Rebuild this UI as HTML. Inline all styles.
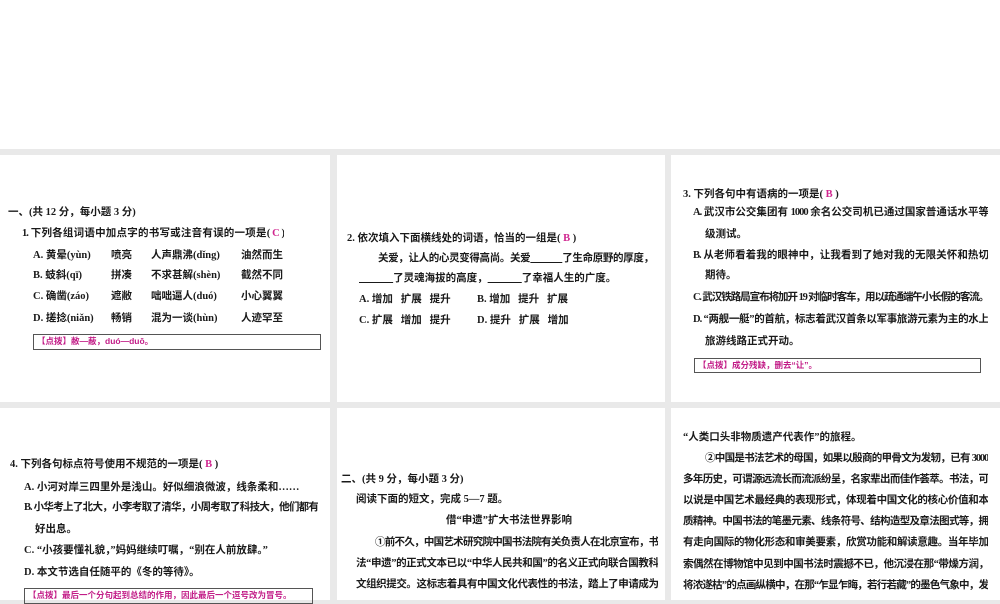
<!DOCTYPE html>
<html><head><meta charset="utf-8"><style>
*{margin:0;padding:0;box-sizing:border-box}
body{width:1000px;height:600px;background:#e9e9e9;position:relative;overflow:hidden;font-family:"Liberation Serif","Noto Sans CJK SC",sans-serif;color:#1a1a1a}
.top{position:absolute;left:0;top:0;width:1000px;height:149px;background:#fff}
.p{position:absolute;background:#fff}
.l{position:absolute;font-size:10.5px;line-height:14px;white-space:nowrap;font-weight:bold;font-family:"Liberation Serif","Noto Sans CJK SC",sans-serif;overflow:hidden}
.j{text-align:justify;text-align-last:justify;letter-spacing:-1px}
.ans{color:#d0268f}
.box{position:absolute;border:1px solid #555;font-size:8.5px;line-height:12px;color:#c21c87;padding-left:3px;white-space:nowrap;font-weight:bold;font-family:"Liberation Sans","Noto Sans CJK SC",sans-serif;overflow:hidden}
</style></head><body>
<div class="top"></div>
<div class="p" style="left:0;top:155px;width:330px;height:247px"></div>
<div class="p" style="left:337px;top:155px;width:328px;height:247px"></div>
<div class="p" style="left:671px;top:155px;width:329px;height:247px"></div>
<div class="p" style="left:0;top:408px;width:330px;height:192px"></div>
<div class="p" style="left:337px;top:408px;width:328px;height:192px"></div>
<div class="p" style="left:671px;top:408px;width:329px;height:192px"></div>

<!-- panel 1 -->
<div class="l" style="left:8px;top:206px">一、(共 12 分，每小题 3 分)</div>
<div class="l j" style="left:22px;top:227px;width:262px">1. 下列各组词语中加点字的书写或注音有误的一项是( <span class="ans">C</span> )</div>
<div class="l" style="left:33px;top:249px">A. 黄晕(yùn)</div><div class="l" style="left:111px;top:249px">喷亮</div><div class="l" style="left:151px;top:249px">人声鼎沸(dǐng)</div><div class="l" style="left:241px;top:249px">油然而生</div>
<div class="l" style="left:33px;top:269px">B. 蚑斜(qī)</div><div class="l" style="left:111px;top:269px">拼凑</div><div class="l" style="left:151px;top:269px">不求甚解(shèn)</div><div class="l" style="left:241px;top:269px">截然不同</div>
<div class="l" style="left:33px;top:290px">C. 确凿(záo)</div><div class="l" style="left:111px;top:290px">遮敝</div><div class="l" style="left:151px;top:290px">咄咄逼人(duó)</div><div class="l" style="left:241px;top:290px">小心翼翼</div>
<div class="l" style="left:33px;top:312px">D. 搓捻(niǎn)</div><div class="l" style="left:111px;top:312px">畅销</div><div class="l" style="left:151px;top:312px">混为一谈(hùn)</div><div class="l" style="left:241px;top:312px">人迹罕至</div>
<div class="box" style="left:33px;top:334px;width:288px;height:16px">【点拨】敝—蔽，duó—duō。</div>

<!-- panel 2 -->
<div class="l" style="left:347px;top:232px">2. 依次填入下面横线处的词语，恰当的一组是( <span class="ans">B</span> )</div>
<div class="l j" style="left:378px;top:252px;width:275px">关爱，让人的心灵变得高尚。关爱<u>&nbsp;&nbsp;&nbsp;&nbsp;&nbsp;&nbsp;&nbsp;&nbsp;&nbsp;&nbsp;&nbsp;&nbsp;&nbsp;&nbsp;</u>了生命原野的厚度，</div>
<div class="l" style="left:359px;top:272px"><u>&nbsp;&nbsp;&nbsp;&nbsp;&nbsp;&nbsp;&nbsp;&nbsp;&nbsp;&nbsp;&nbsp;&nbsp;&nbsp;</u>了灵魂海拔的高度，<u>&nbsp;&nbsp;&nbsp;&nbsp;&nbsp;&nbsp;&nbsp;&nbsp;&nbsp;&nbsp;&nbsp;&nbsp;&nbsp;</u>了幸福人生的广度。</div>
<div class="l" style="left:359px;top:293px">A. 增加&nbsp;&nbsp;&nbsp;扩展&nbsp;&nbsp;&nbsp;提升</div><div class="l" style="left:477px;top:293px">B. 增加&nbsp;&nbsp;&nbsp;提升&nbsp;&nbsp;&nbsp;扩展</div>
<div class="l" style="left:359px;top:314px">C. 扩展&nbsp;&nbsp;&nbsp;增加&nbsp;&nbsp;&nbsp;提升</div><div class="l" style="left:477px;top:314px">D. 提升&nbsp;&nbsp;&nbsp;扩展&nbsp;&nbsp;&nbsp;增加</div>

<!-- panel 3 -->
<div class="l" style="left:683px;top:188px">3. 下列各句中有语病的一项是( <span class="ans">B</span> )</div>
<div class="l j" style="left:693px;top:206px;width:295px">A. 武汉市公交集团有 1000 余名公交司机已通过国家普通话水平等</div>
<div class="l" style="left:705px;top:228px">级测试。</div>
<div class="l j" style="left:693px;top:249px;width:295px">B. 从老师看着我的眼神中，让我看到了她对我的无限关怀和热切</div>
<div class="l" style="left:705px;top:269px">期待。</div>
<div class="l j" style="left:693px;top:291px;width:295px;letter-spacing:-1.3px">C. 武汉铁路局宣布将加开 19 对临时客车，用以疏通端午小长假的客流。</div>
<div class="l j" style="left:693px;top:313px;width:295px">D. “两舰一艇”的首航，标志着武汉首条以军事旅游元素为主的水上</div>
<div class="l" style="left:705px;top:335px">旅游线路正式开动。</div>
<div class="box" style="left:694px;top:358px;width:287px;height:15px">【点拨】成分残缺，删去“让”。</div>

<!-- row2 panel1 -->
<div class="l" style="left:10px;top:458px">4. 下列各句标点符号使用不规范的一项是( <span class="ans">B</span> )</div>
<div class="l" style="left:24px;top:481px">A. 小河对岸三四里外是浅山。好似细浪微波，线条柔和……</div>
<div class="l j" style="left:24px;top:501px;width:294px">B. 小华考上了北大，小李考取了清华，小周考取了科技大，他们都有</div>
<div class="l" style="left:35px;top:523px">好出息。</div>
<div class="l" style="left:24px;top:544px">C. “小孩要懂礼貌，”妈妈继续叮嘱，“别在人前放肆。”</div>
<div class="l" style="left:24px;top:566px">D. 本文节选自任随平的《冬的等待》。</div>
<div class="box" style="left:24px;top:588px;width:289px;height:16px">【点拨】最后一个分句起到总结的作用，因此最后一个逗号改为冒号。</div>

<!-- row2 panel2 -->
<div class="l" style="left:341px;top:473px">二、(共 9 分，每小题 3 分)</div>
<div class="l" style="left:356px;top:493px">阅读下面的短文，完成 5—7 题。</div>
<div class="l" style="left:446px;top:514px">借“申遗”扩大书法世界影响</div>
<div class="l j" style="left:375px;top:536px;width:283px;letter-spacing:-1.1px">①前不久，中国艺术研究院中国书法院有关负责人在北京宣布，书</div>
<div class="l j" style="left:356px;top:557px;width:302px">法“申遗”的正式文本已以“中华人民共和国”的名义正式向联合国教科</div>
<div class="l j" style="left:356px;top:578px;width:302px">文组织提交。这标志着具有中国文化代表性的书法，踏上了申请成为</div>

<!-- row2 panel3 -->
<div class="l" style="left:683px;top:431px">“人类口头非物质遗产代表作”的旅程。</div>
<div class="l j" style="left:705px;top:452px;width:283px;letter-spacing:-1.2px">②中国是书法艺术的母国，如果以殷商的甲骨文为发轫，已有 3000</div>
<div class="l j" style="left:683px;top:473px;width:305px">多年历史，可谓源远流长而流派纷呈，名家辈出而佳作荟萃。书法，可</div>
<div class="l j" style="left:683px;top:494px;width:305px">以说是中国艺术最经典的表现形式，体现着中国文化的核心价值和本</div>
<div class="l j" style="left:683px;top:515px;width:305px">质精神。中国书法的笔墨元素、线条符号、结构造型及章法图式等，拥</div>
<div class="l j" style="left:683px;top:536px;width:305px">有走向国际的物化形态和审美要素，欣赏功能和解读意趣。当年毕加</div>
<div class="l j" style="left:683px;top:558px;width:305px">索偶然在博物馆中见到中国书法时震撼不已，他沉浸在那“带燥方润，</div>
<div class="l j" style="left:683px;top:579px;width:305px">将浓遂枯”的点画纵横中，在那“乍显乍晦，若行若藏”的墨色气象中，发</div>
</body></html>
